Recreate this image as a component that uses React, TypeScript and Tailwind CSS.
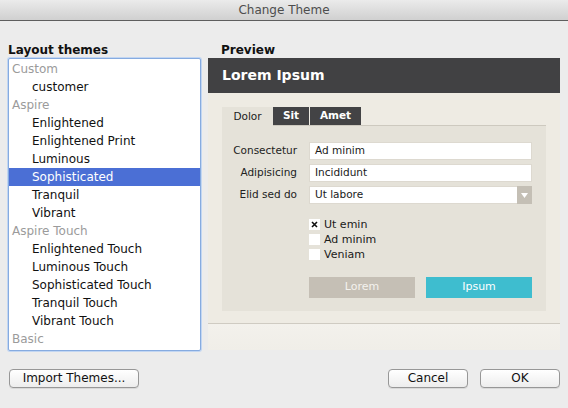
const themes: { label: string; group?: boolean; selected?: boolean }[] = [
  { label: 'Custom', group: true },
  { label: 'customer' },
  { label: 'Aspire', group: true },
  { label: 'Enlightened' },
  { label: 'Enlightened Print' },
  { label: 'Luminous' },
  { label: 'Sophisticated', selected: true },
  { label: 'Tranquil' },
  { label: 'Vibrant' },
  { label: 'Aspire Touch', group: true },
  { label: 'Enlightened Touch' },
  { label: 'Luminous Touch' },
  { label: 'Sophisticated Touch' },
  { label: 'Tranquil Touch' },
  { label: 'Vibrant Touch' },
  { label: 'Basic', group: true },
];

function MacButton({ label, width }: { label: string; width: string }) {
  return (
    <button
      type="button"
      className={`${width} h-[19px] rounded-[4px] border border-[#979797] bg-gradient-to-b from-white to-[#ededed] text-[12px] leading-[17px] text-[#111] shadow-[0_1px_0_rgba(0,0,0,0.08)]`}
    >
      {label}
    </button>
  );
}

function Field({ label, value, select }: { label: string; value: string; select?: boolean }) {
  return (
    <div className="flex h-[18px] items-center">
      <span className="w-[75px] text-right text-[10.5px] text-[#222]">{label}</span>
      <div className="ml-[12px] flex h-[18px] w-[223px] items-center bg-white shadow-[inset_0_0_0_1px_#ddd9d0]">
        <span className="flex-1 pl-[6px] text-[10.5px] text-[#1a1a1a]">{value}</span>
        {select && (
          <div className="flex h-[18px] w-[15px] items-center justify-center bg-[#c4bfb5]">
            <svg width="7" height="5" viewBox="0 0 7 5">
              <path d="M0 0h7L3.5 5z" fill="#fff" />
            </svg>
          </div>
        )}
      </div>
    </div>
  );
}

function Check({ label, checked }: { label: string; checked?: boolean }) {
  return (
    <div className="flex h-[11px] items-center gap-[4px]">
      <div className="flex h-[11px] w-[11px] items-center justify-center bg-white">
        {checked && (
          <svg width="7" height="7" viewBox="0 0 7 7">
            <path d="M1 1l5 5M6 1L1 6" stroke="#111" strokeWidth="1.6" />
          </svg>
        )}
      </div>
      <span className="text-[11px] leading-[11px] text-[#1a1a1a]">{label}</span>
    </div>
  );
}

export default function App() {
  return (
    <div className="flex h-[408px] w-[568px] flex-col overflow-hidden bg-[#ececec] font-['DejaVu_Sans',sans-serif]">
      <div className="flex h-[21px] items-center justify-center border-b border-[#5e5e5e] bg-gradient-to-b from-[#ebebeb] to-[#d0d0d0] text-[12px] text-[#4d4d4d]">
        Change Theme
      </div>

      <div className="flex gap-[7px] px-[8px] pt-[22px]">
        <div className="flex w-[193px] flex-col">
          <div className="h-[15px] text-[12px] font-bold leading-[15px] text-[#111]">Layout themes</div>
          <div className="h-[293px] overflow-hidden rounded-[2px] border border-[#86abe0] bg-white pt-px shadow-[0_0_0_1px_#c2d6f2]">
            {themes.map((t) => (
              <div
                key={t.label}
                className={`h-[18px] text-[12px] leading-[18px] ${
                  t.group
                    ? 'pl-[3px] text-[#9b9b9b]'
                    : t.selected
                      ? 'bg-[#4b6fd5] pl-[23px] text-white'
                      : 'pl-[23px] text-[#111]'
                }`}
              >
                {t.label}
              </div>
            ))}
          </div>
        </div>

        <div className="flex w-[352px] flex-col">
          <div className="h-[15px] pl-[13px] text-[12px] font-bold leading-[15px] text-[#111]">Preview</div>
          <div className="flex h-[292px] flex-col bg-[#eeebe3]">
            <div className="flex h-[35px] items-center bg-[#414143] pl-[14px] text-[14px] font-bold text-white">
              Lorem Ipsum
            </div>
            <div className="mx-[14px] mt-[14px] flex flex-col">
              <div className="flex h-[19px] border-b border-[#cdc9bf]">
                <div className="-mb-px flex w-[51px] items-center justify-center bg-[#e5e2d9] text-[10.5px] text-[#1a1a1a]">
                  Dolor
                </div>
                <div className="flex w-[36px] items-center justify-center bg-[#434345] text-[10.5px] font-bold text-white">
                  Sit
                </div>
                <div className="ml-px flex w-[51px] items-center justify-center bg-[#434345] text-[10.5px] font-bold text-white">
                  Amet
                </div>
              </div>
              <div className="flex flex-col bg-[#e5e2d9] pb-[13px] pt-[16px]">
                <div className="flex flex-col gap-[4px]">
                  <Field label="Consectetur" value="Ad minim" />
                  <Field label="Adipisicing" value="Incididunt" />
                  <Field label="Elid sed do" value="Ut labore" select />
                </div>
                <div className="ml-[87px] mt-[15px] flex flex-col gap-[4px]">
                  <Check label="Ut emin" checked />
                  <Check label="Ad minim" />
                  <Check label="Veniam" />
                </div>
                <div className="ml-[87px] mt-[17px] flex gap-[11px]">
                  <div className="flex h-[21px] w-[106px] items-center justify-center bg-[#c5bfb5] text-[11px] text-[#f4f2ee]">
                    Lorem
                  </div>
                  <div className="flex h-[21px] w-[106px] items-center justify-center bg-[#3ebdcf] text-[11px] text-white">
                    Ipsum
                  </div>
                </div>
              </div>
            </div>
            <div className="mt-[12px] flex-1 border-t border-[#cfcbc2] bg-gradient-to-b from-[#f3f1ec] to-[#f0eee8]" />
          </div>
        </div>
      </div>

      <div className="flex items-center pl-[9px] pr-[8px] pt-[18px]">
        <MacButton label="Import Themes..." width="w-[130px]" />
        <div className="flex-1" />
        <div className="flex gap-[12px]">
          <MacButton label="Cancel" width="w-[80px]" />
          <MacButton label="OK" width="w-[80px]" />
        </div>
      </div>
    </div>
  );
}
